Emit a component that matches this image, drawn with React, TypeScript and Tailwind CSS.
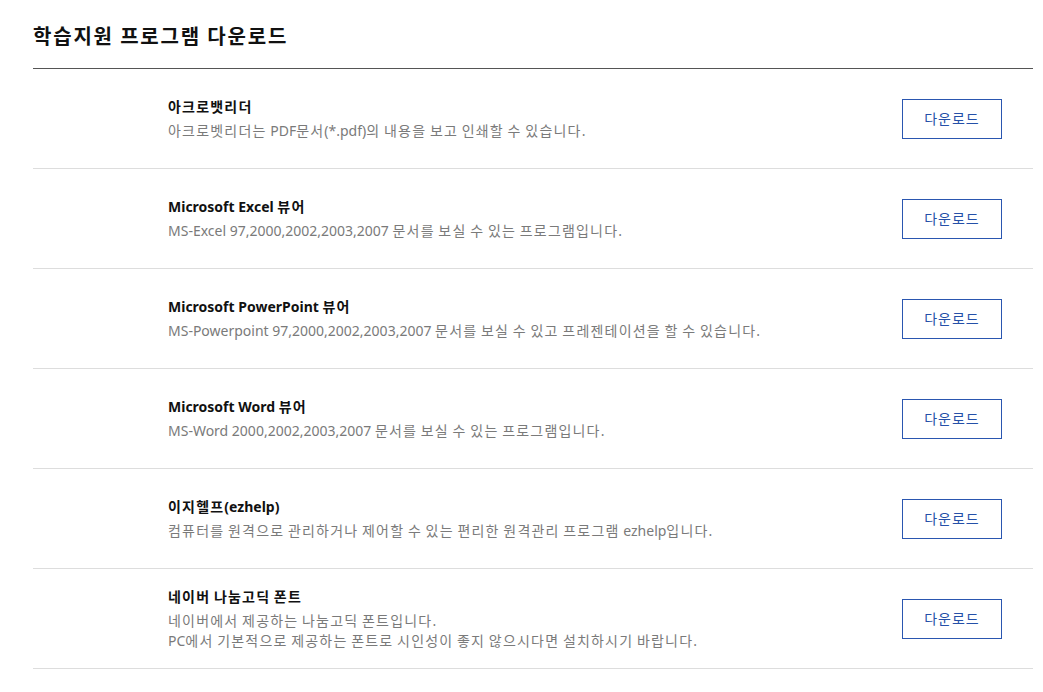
const programs = [
    {
        title: "아크로뱃리더",
        desc: ["아크로벳리더는 PDF문서(*.pdf)의 내용을 보고 인쇄할 수 있습니다."],
    },
    {
        title: "Microsoft Excel 뷰어",
        desc: ["MS-Excel 97,2000,2002,2003,2007 문서를 보실 수 있는 프로그램입니다."],
    },
    {
        title: "Microsoft PowerPoint 뷰어",
        desc: ["MS-Powerpoint 97,2000,2002,2003,2007 문서를 보실 수 있고 프레젠테이션을 할 수 있습니다."],
    },
    {
        title: "Microsoft Word 뷰어",
        desc: ["MS-Word 2000,2002,2003,2007 문서를 보실 수 있는 프로그램입니다."],
    },
    {
        title: "이지헬프(ezhelp)",
        desc: ["컴퓨터를 원격으로 관리하거나 제어할 수 있는 편리한 원격관리 프로그램 ezhelp입니다."],
    },
    {
        title: "네이버 나눔고딕 폰트",
        desc: [
            "네이버에서 제공하는 나눔고딕 폰트입니다.",
            "PC에서 기본적으로 제공하는 폰트로 시인성이 좋지 않으시다면 설치하시기 바랍니다.",
        ],
    },
];

// hangul gets a little extra spacing so it runs as wide as the original font
function Txt({ text }: { text: string }) {
    const parts = text.split(/([\u3131-\uD79D]+)/);
    return (
        <>
            {parts.map((p, i) =>
                /[\u3131-\uD79D]/.test(p) ? (
                    <span key={i} className="tracking-[1.2px]">
                        {p}
                    </span>
                ) : (
                    <span key={i}>{p}</span>
                )
            )}
        </>
    );
}

export default function App() {
    return (
        <div className="min-h-screen bg-white px-[33px] pt-[22px] font-['Noto_Sans','Noto_Sans_CJK_KR',sans-serif] text-[#111]">
            <h2 className="pb-[18px] font-['Noto_Sans_CJK_KR',sans-serif] text-[20px] leading-[28px] font-bold tracking-[1.8px]">
                학습지원 프로그램 다운로드
            </h2>
            <div className="w-[1000px] border-t border-[#555]">
                {programs.map((item) => (
                    <div
                        key={item.title}
                        className="flex h-[100px] items-center border-b border-[#ddd] pr-[31px] pl-[135px]"
                    >
                        <div className="flex-1">
                            <h4 className="mb-[4px] text-[14px] leading-[20px] font-bold">
                                <Txt text={item.title} />
                            </h4>
                            {item.desc.map((line) => (
                                <p key={line} className="text-[14px] leading-[20px] text-[#7a7a7a]">
                                    <Txt text={line} />
                                </p>
                            ))}
                        </div>
                        <button className="flex h-[40px] w-[100px] items-center justify-center border border-[#2a56b0] font-['Noto_Sans_CJK_KR',sans-serif] text-[14px] tracking-[1px] text-[#2550a8]">
                            다운로드
                        </button>
                    </div>
                ))}
            </div>
        </div>
    );
}
